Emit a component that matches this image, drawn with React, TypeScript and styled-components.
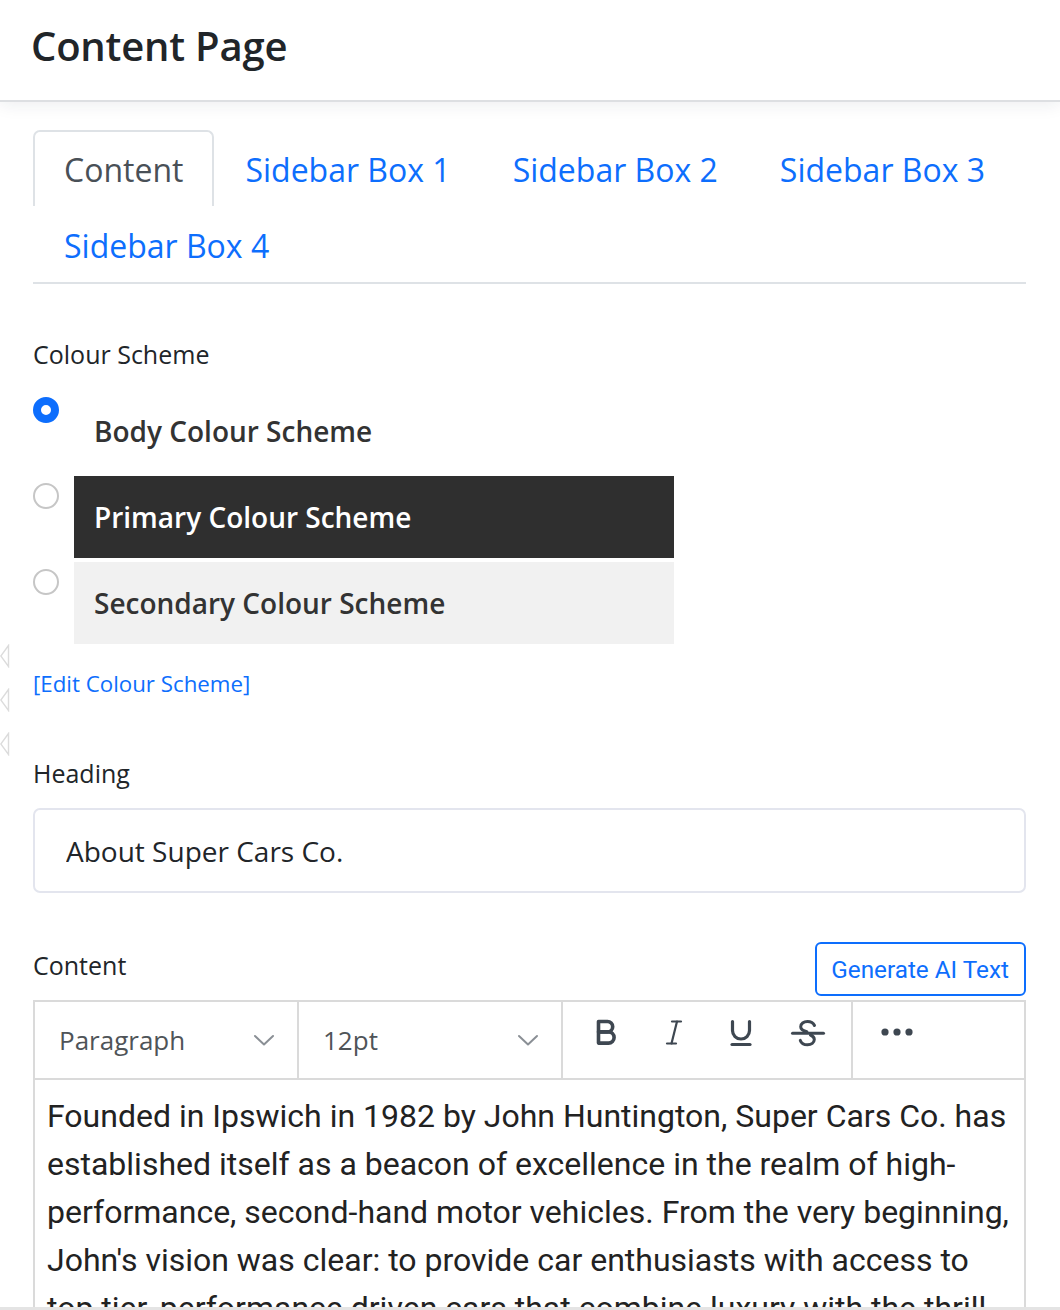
import styled, { createGlobalStyle } from "styled-components";

const GlobalStyle = createGlobalStyle`
  body {
    margin: 0;
    background: #ffffff;
    font-family: "Open Sans", "Liberation Sans", sans-serif;
    color: #212529;
  }
  * {
    box-sizing: border-box;
  }
`;

type Scheme = "body" | "primary" | "secondary";

const schemes: { id: Scheme; label: string }[] = [
  { id: "body", label: "Body Colour Scheme" },
  { id: "primary", label: "Primary Colour Scheme" },
  { id: "secondary", label: "Secondary Colour Scheme" },
];

const tabs = ["Content", "Sidebar Box 1", "Sidebar Box 2", "Sidebar Box 3", "Sidebar Box 4"];

function BoldIcon() {
  return (
    <svg width="26" height="30" viewBox="0 0 26 30" fill="none" stroke="currentColor" strokeWidth="3.6" strokeLinejoin="round">
      <path d="M4.5 3.5h9a5.2 5.2 0 0 1 0 10.4h-9z" />
      <path d="M4.5 13.9h10a5.6 5.6 0 0 1 0 11.2h-10z" />
    </svg>
  );
}

function ItalicIcon() {
  return (
    <svg width="26" height="30" viewBox="0 0 26 30" fill="none" stroke="currentColor" strokeWidth="2.2" strokeLinecap="round">
      <path d="M11 3.5h9" />
      <path d="M6 25.5h9" />
      <path d="M16 3.5l-5.5 22" />
    </svg>
  );
}

function UnderlineIcon() {
  return (
    <svg width="26" height="30" viewBox="0 0 26 30" fill="none" stroke="currentColor" strokeWidth="3.2" strokeLinecap="round">
      <path d="M4.5 3.5v9a8.5 8.5 0 0 0 17 0v-9" />
      <path d="M4 26.5h18" />
    </svg>
  );
}

function StrikeIcon() {
  return (
    <svg width="36" height="30" viewBox="0 0 36 30" fill="none" stroke="currentColor" strokeWidth="3" strokeLinecap="round">
      <path d="M24.5 7.5c-1.2-2.6-3.8-4-7-4-4 0-6.8 2.2-6.8 5.2 0 2.6 2 4 6.2 5" />
      <path d="M20.5 17c2.4 1 3.8 2.5 3.8 4.6 0 3-3 5.2-6.8 5.2-3.4 0-6.2-1.6-7.2-4.4" />
      <path d="M2.5 15.2h31" />
    </svg>
  );
}

function MoreIcon() {
  return (
    <svg width="36" height="30" viewBox="0 0 36 30" fill="currentColor">
      <circle cx="6" cy="14" r="3.6" />
      <circle cx="18" cy="14" r="3.6" />
      <circle cx="30" cy="14" r="3.6" />
    </svg>
  );
}

function Chevron() {
  return (
    <svg width="22" height="14" viewBox="0 0 22 14" fill="none" stroke="#8a8f95" strokeWidth="2" strokeLinecap="round" strokeLinejoin="round">
      <path d="M2 3l9 8.5L20 3" />
    </svg>
  );
}

function EdgeArrow() {
  return (
    <svg width="10" height="24" viewBox="0 0 10 24" fill="none" stroke="#dcdcdc" strokeWidth="1.4">
      <path d="M8.5 1.5L0.8 12l7.7 10.5z" />
    </svg>
  );
}

export default function App() {
  const active: Scheme = "body";
  return (
    <>
      <GlobalStyle />
      <Header>
        <Title>Content Page</Title>
      </Header>
      <EdgeArrows>
        <EdgeArrow />
        <EdgeArrow />
        <EdgeArrow />
      </EdgeArrows>
      <Main>
        <TabList>
          {tabs.map((t, i) => (
            <Tab key={t} $active={i === 0}>
              {t}
            </Tab>
          ))}
        </TabList>

        <FieldLabel $top={52}>Colour Scheme</FieldLabel>
        <SchemeList>
          {schemes.map((s) => (
            <SchemeRow key={s.id}>
              <Radio $checked={s.id === active} />
              <SchemeBox $variant={s.id}>{s.label}</SchemeBox>
            </SchemeRow>
          ))}
        </SchemeList>
        <EditLink href="#">[Edit Colour Scheme]</EditLink>

        <FieldLabel $top={55}>Heading</FieldLabel>
        <TextInput defaultValue="About Super Cars Co." />

        <ContentHead>
          <FieldLabel $top={5}>Content</FieldLabel>
          <GenerateButton>Generate AI Text</GenerateButton>
        </ContentHead>

        <Editor>
          <Toolbar>
            <Dropdown>
              <span>Paragraph</span>
              <Chevron />
            </Dropdown>
            <Dropdown>
              <span>12pt</span>
              <Chevron />
            </Dropdown>
            <ToolGroup>
              <ToolButton><BoldIcon /></ToolButton>
              <ToolButton><ItalicIcon /></ToolButton>
              <ToolButton><UnderlineIcon /></ToolButton>
              <ToolButton><StrikeIcon /></ToolButton>
            </ToolGroup>
            <ToolGroup $grow>
              <ToolButton><MoreIcon /></ToolButton>
            </ToolGroup>
          </Toolbar>
          <EditorBody>
            Founded in Ipswich in 1982 by John Huntington, Super Cars Co. has
            established itself as a beacon of excellence in the realm of
            high-performance, second-hand motor vehicles. From the very
            beginning, John's vision was clear: to provide car enthusiasts with
            access to top tier, performance driven cars that combine luxury with
            the thrill of the open road. Every vehicle we sell is hand-picked and
            carefully inspected by our team of specialists.
          </EditorBody>
        </Editor>
      </Main>
      <BottomEdge />
    </>
  );
}

const Header = styled.header`
  height: 102px;
  display: flex;
  align-items: center;
  padding: 0 33px 10px 31px;
  background: #ffffff;
  border-bottom: 2px solid #dddfe2;
  box-shadow: 0 3px 16px rgba(30, 40, 60, 0.08);
  position: relative;
  z-index: 1;
`;

const Title = styled.h1`
  margin: 0;
  font-size: 40px;
  font-weight: 600;
  color: #212529;
  letter-spacing: -0.2px;
`;

const EdgeArrows = styled.div`
  position: absolute;
  left: 0;
  top: 644px;
  display: flex;
  flex-direction: column;
  gap: 20px;
`;

const Main = styled.main`
  padding: 28px 34px 0 33px;
`;

const TabList = styled.nav`
  display: flex;
  flex-wrap: wrap;
  border-bottom: 2px solid #dee2e6;
`;

const Tab = styled.a<{ $active?: boolean }>`
  height: 76px;
  display: flex;
  align-items: center;
  padding: 0 29px;
  font-size: 32px;
  cursor: pointer;
  color: ${(p) => (p.$active ? "#495057" : "#0d6efd")};
  border: 2px solid ${(p) => (p.$active ? "#dee2e6" : "transparent")};
  border-bottom: none;
  border-radius: 7px 7px 0 0;
  background: #ffffff;
`;

const FieldLabel = styled.div<{ $top: number }>`
  margin-top: ${(p) => p.$top}px;
  font-size: 25px;
  line-height: 36px;
  color: #212529;
`;

const SchemeList = styled.div`
  margin-top: 18px;
  display: flex;
  flex-direction: column;
  gap: 4px;
`;

const SchemeRow = styled.div`
  display: flex;
  align-items: flex-start;
  gap: 15px;
`;

const Radio = styled.span<{ $checked?: boolean }>`
  width: 26px;
  height: 26px;
  margin-top: 7px;
  border-radius: 50%;
  flex-shrink: 0;
  background: #ffffff;
  border: ${(p) => (p.$checked ? "8px solid #0d6efd" : "2px solid #c6c6c6")};
`;

const SchemeBox = styled.div<{ $variant: Scheme }>`
  width: 600px;
  height: 82px;
  display: flex;
  align-items: center;
  padding: 0 20px;
  font-size: 28px;
  font-weight: 600;
  background: ${(p) =>
    p.$variant === "primary" ? "#2f2f2f" : p.$variant === "secondary" ? "#f1f1f1" : "#ffffff"};
  color: ${(p) => (p.$variant === "primary" ? "#ffffff" : "#333333")};
`;

const EditLink = styled.a`
  display: block;
  margin-top: 24px;
  font-size: 22.3px;
  line-height: 32px;
  color: #0d6efd;
  text-decoration: none;
`;

const TextInput = styled.input`
  display: block;
  width: 100%;
  height: 85px;
  margin-top: 17px;
  padding: 0 31px;
  font-family: "Open Sans", "Liberation Sans", sans-serif;
  font-size: 28px;
  color: #212529;
  border: 2px solid #e3e5ee;
  border-radius: 7px;
  outline: none;
`;

const ContentHead = styled.div`
  margin-top: 49px;
  display: flex;
  justify-content: space-between;
  align-items: flex-start;
`;

const GenerateButton = styled.button`
  height: 54px;
  padding: 0 15px 0 14px;
  font-family: Roboto, "Liberation Sans", sans-serif;
  font-size: 24.3px;
  color: #0d6efd;
  background: #ffffff;
  border: 2px solid #0d6efd;
  border-radius: 6px;
  cursor: pointer;
`;

const Editor = styled.div`
  margin-top: 4px;
  border: 2px solid #dadada;
  border-bottom: none;
`;

const Toolbar = styled.div`
  display: flex;
  height: 78px;
  border-bottom: 2px solid #dadada;
`;

const Dropdown = styled.div`
  width: 264px;
  display: flex;
  align-items: center;
  justify-content: space-between;
  padding: 0 22px 0 24px;
  border-right: 2px solid #dadada;
  font-size: 26px;
  color: #4f5458;
`;

const ToolGroup = styled.div<{ $grow?: boolean }>`
  display: flex;
  align-items: flex-start;
  padding: 14px 10px 0;
  flex: ${(p) => (p.$grow ? 1 : "none")};
  border-right: ${(p) => (p.$grow ? "none" : "2px solid #dadada")};
`;

const ToolButton = styled.span`
  width: 67px;
  height: 34px;
  display: flex;
  align-items: center;
  justify-content: center;
  color: #3e4751;
`;

const EditorBody = styled.div`
  padding: 12px 14px 0 12px;
  font-family: Roboto, "Liberation Sans", sans-serif;
  font-size: 32px;
  line-height: 48px;
  color: #222222;
`;

const BottomEdge = styled.div`
  position: fixed;
  left: 0;
  right: 0;
  bottom: 0;
  height: 3px;
  background: #e4e4e4;
`;
